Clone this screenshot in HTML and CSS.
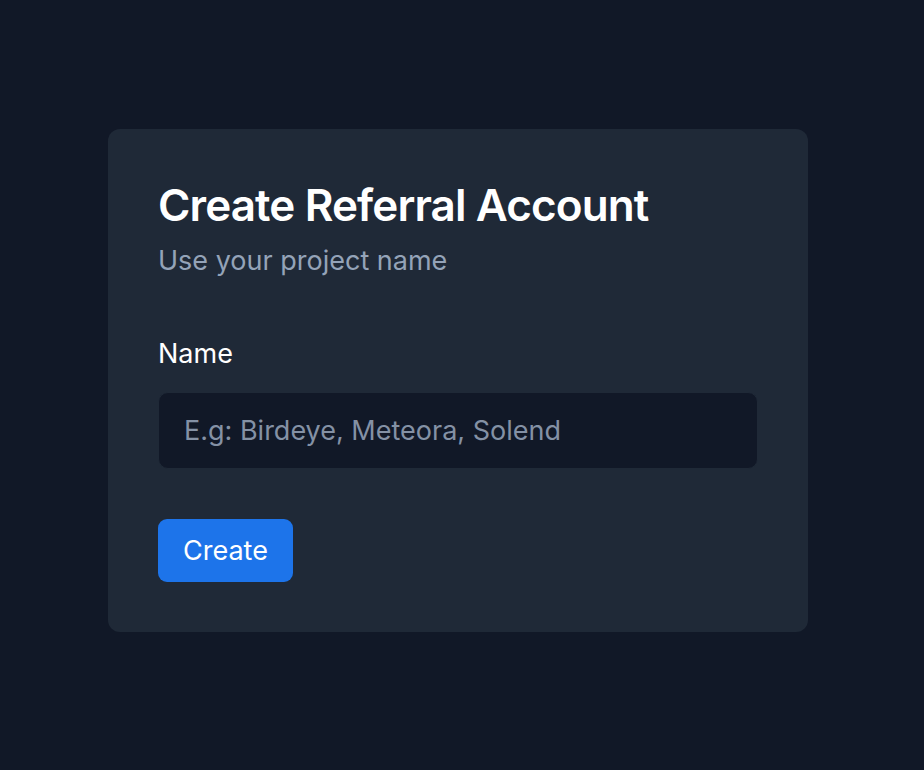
FILE: index.html
```html
<!DOCTYPE html>
<html lang="en">
<head>
<meta charset="utf-8">
<title>Create Referral Account</title>
<link rel="stylesheet" href="styles.css">
</head>
<body>
<main class="page">
  <section class="card">
    <h1 class="title">Create Referral Account</h1>
    <p class="subtitle">Use your project name</p>
    <form class="form">
      <label class="label" for="name">Name</label>
      <input class="input" id="name" type="text" placeholder="E.g: Birdeye, Meteora, Solend">
      <button class="button" type="button">Create</button>
    </form>
  </section>
</main>
</body>
</html>
```
FILE: styles.css
```css
* { box-sizing: border-box; }
html, body { margin: 0; height: 100%; }
body {
  background: #111827;
  font-family: Inter, "Noto Sans", sans-serif;
  color: #fff;
}
.page {
  padding: 129px 0 0 108px;
}
.card {
  width: 700px;
  background: #1f2937;
  border-radius: 12px;
  padding: 50px 50px 50px 50px;
}
.title {
  margin: 0;
  font-size: 44px;
  line-height: 52px;
  font-weight: 600;
  letter-spacing: -0.02em;
  color: #fff;
}
.subtitle {
  margin: 13px 0 0;
  font-size: 27px;
  line-height: 34px;
  color: #94a3b8;
}
.form {
  display: flex;
  flex-direction: column;
  align-items: flex-start;
  margin-top: 60px;
}
.label {
  font-size: 27px;
  line-height: 32px;
  font-weight: 400;
  color: #fff;
}
.input {
  margin-top: 22px;
  width: 600px;
  height: 77px;
  background: #111827;
  border: 1px solid #1f2937;
  border-radius: 10px;
  padding: 0 25px;
  font: inherit;
  font-size: 27px;
  color: #fff;
  outline: none;
}
.input::placeholder { color: #8491a5; }
.button {
  margin-top: 50px;
  height: 63px;
  padding: 0 25px;
  background: #1d74ea;
  color: #fff;
  border: none;
  border-radius: 9px;
  font: inherit;
  font-size: 27px;
  font-weight: 400;
}
```
